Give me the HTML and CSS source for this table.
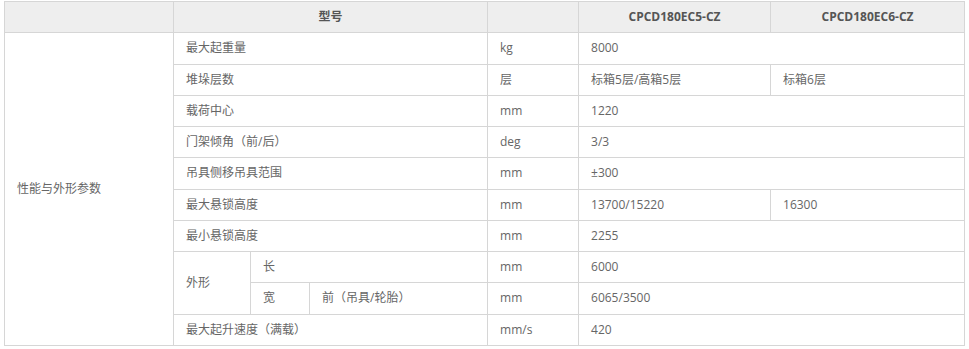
FILE: index.html
```html
<!DOCTYPE html>
<html lang="zh-CN">
<head>
<meta charset="utf-8">
<title>参数表</title>
<link rel="stylesheet" href="styles.css">
</head>
<body>
<div class="wrap">
<table class="spec">
<colgroup>
<col class="c1"><col class="c2"><col class="c3"><col class="c4"><col class="c5"><col class="c6"><col class="c7">
</colgroup>
<thead>
<tr>
<th></th>
<th colspan="3">型号</th>
<th></th>
<th>CPCD180EC5-CZ</th>
<th>CPCD180EC6-CZ</th>
</tr>
</thead>
<tbody>
<tr>
<td rowspan="10">性能与外形参数</td>
<td colspan="3">最大起重量</td>
<td>kg</td>
<td colspan="2">8000</td>
</tr>
<tr>
<td colspan="3">堆垛层数</td>
<td>层</td>
<td>标箱5层/高箱5层</td>
<td>标箱6层</td>
</tr>
<tr>
<td colspan="3">载荷中心</td>
<td>mm</td>
<td colspan="2">1220</td>
</tr>
<tr>
<td colspan="3">门架倾角（前/后）</td>
<td>deg</td>
<td colspan="2">3/3</td>
</tr>
<tr>
<td colspan="3">吊具侧移吊具范围</td>
<td>mm</td>
<td colspan="2">±300</td>
</tr>
<tr>
<td colspan="3">最大悬锁高度</td>
<td>mm</td>
<td>13700/15220</td>
<td>16300</td>
</tr>
<tr>
<td colspan="3">最小悬锁高度</td>
<td>mm</td>
<td colspan="2">2255</td>
</tr>
<tr>
<td rowspan="2">外形</td>
<td colspan="2">长</td>
<td>mm</td>
<td colspan="2">6000</td>
</tr>
<tr>
<td>宽</td>
<td>前（吊具/轮胎）</td>
<td>mm</td>
<td colspan="2">6065/3500</td>
</tr>
<tr>
<td colspan="3">最大起升速度（满载）</td>
<td>mm/s</td>
<td colspan="2">420</td>
</tr>
</tbody>
</table>
</div>
</body>
</html>
```

FILE: styles.css
```css
html, body {
  margin: 0;
  padding: 0;
  background: #fff;
}
.wrap {
  padding: 1px 5px 0 4px;
}
.spec {
  width: 960px;
  table-layout: fixed;
  border-collapse: collapse;
  font-family: "Open Sans", "Noto Sans CJK SC", sans-serif;
  font-size: 12px;
  color: #666;
}
.c1 { width: 169px; }
.c2 { width: 77px; }
.c3 { width: 59px; }
.c4 { width: 178px; }
.c5 { width: 91px; }
.c6 { width: 192px; }
.c7 { width: 194px; }
.spec th,
.spec td {
  border: 1px solid #d6d6d6;
  height: 30.25px;
  padding: 0 12px;
  line-height: 16px;
  text-align: left;
  vertical-align: middle;
  white-space: nowrap;
}
.spec th {
  background: #eeeeee;
  color: #555;
  font-weight: bold;
  text-align: center;
}
```
